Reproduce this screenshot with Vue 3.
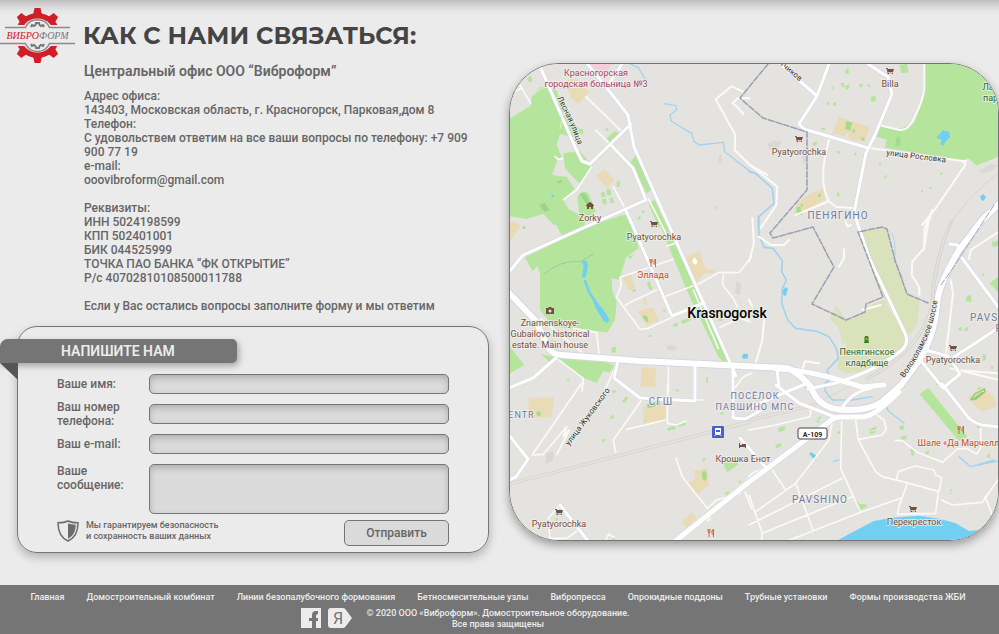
<script setup>
import { ref } from 'vue'

const name = ref('')
const phone = ref('')
const email = ref('')
const message = ref('')

const links = [
  'Главная',
  'Домостроительный комбинат',
  'Линии безопалубочного формования',
  'Бетносмесительные узлы',
  'Вибропресса',
  'Опрокидные поддоны',
  'Трубные установки',
  'Формы производства ЖБИ'
]

const teeth = [-84, -42, 0, 42, 84]

const places = [
  { x: 596, y: 76, t: 'Красногорская', c: 'rose' },
  { x: 596, y: 87, t: 'городская больница №3', c: 'rose' },
  { x: 590, y: 221, t: 'Zorky', c: 'brown' },
  { x: 890, y: 87, t: 'Billa', c: 'brown' },
  { x: 799, y: 155, t: 'Pyatyorochka', c: 'brown' },
  { x: 654, y: 240, t: 'Pyatyorochka', c: 'brown' },
  { x: 653, y: 278, t: 'Эллада', c: 'orange' },
  { x: 550, y: 326, t: 'Znamenskoye-', c: 'brown' },
  { x: 550, y: 337, t: 'Gubailovo historical', c: 'brown' },
  { x: 550, y: 348, t: 'estate. Main house', c: 'brown' },
  { x: 867, y: 355, t: 'Пенягинское', c: 'green' },
  { x: 867, y: 366, t: 'кладбище', c: 'green' },
  { x: 953, y: 363, t: 'Pyatyorochka', c: 'brown' },
  { x: 743, y: 462, t: 'Крошка Енот', c: 'brown' },
  { x: 559, y: 527, t: 'Pyatyorochka', c: 'brown' },
  { x: 914, y: 525, t: 'Перекресток', c: 'brown' },
  { x: 963, y: 446, t: 'Шале «Да Марчелло»', c: 'orange' },
  { x: 997, y: 90, t: 'Ландш', c: 'green' },
  { x: 993, y: 101, t: 'парк', c: 'green' }
]

const districts = [
  { x: 838, y: 219, t: 'ПЕНЯГИНО', c: 'big' },
  { x: 661, y: 405, t: 'СГШ', c: 'big' },
  { x: 755, y: 399, t: 'ПОСЁЛОК' },
  { x: 755, y: 410, t: 'ПАВШИНО МПС' },
  { x: 820, y: 503, t: 'PAVSHINO', c: 'big' },
  { x: 518, y: 418, t: 'CENTR' },
  { x: 998, y: 321, t: 'PAVSHINO', c: 'big' },
  { x: 1003, y: 332, t: 'PO', c: 'big' }
]

const carts = [[890, 71], [799, 139], [654, 224], [953, 348], [559, 512], [913, 509]]
const forks = [[653, 263], [961, 430], [711, 533]]
</script>

<template>
  <div class="page">
    <main class="contacts">
      <section class="info">
        <header class="heading">
          <svg class="logo" viewBox="0 0 75 55" role="img" aria-label="Виброформ">
            <g fill="#cf2027">
              <circle cx="37.500" cy="27.500" r="22.500" />
              <path
                v-for="a in teeth"
                :key="'t' + a"
                d="M33 7 34.500 0h6L42 7z"
                :transform="`rotate(${a} 37.500 27.500)`"
              />
              <path
                v-for="a in teeth"
                :key="'b' + a"
                d="M33 48 34.500 55h6L42 48z"
                :transform="`rotate(${a} 37.500 27.500)`"
              />
            </g>
            <circle cx="37.500" cy="27.500" r="17" fill="#ebebeb" />
            <path d="M0 17h75v21H0z" fill="#ebebeb" />
            <path
              d="M5 19.500h20.500C30 9 45 9 49.500 19.500H70M0 35.500h25.500c4.500 10.500 19.500 10.500 24 0H75"
              fill="none"
              stroke="#8b8b8b"
              stroke-width="1.500"
            />
            <path
              d="M31 19l1-2 2 1 1.500-1 .5-2h3l.5 2 1.500 1 2-1 1 2M31 36l1 2 2-1 1.500 1 .5 2h3l.5-2 1.500-1 2 1 1-2"
              fill="none"
              stroke="#777"
              stroke-width="2"
            />
            <text class="logo-text" x="37.500" y="31" text-anchor="middle">
              <tspan fill="#cf2027">ВИБРО</tspan><tspan fill="#777">ФОРМ</tspan>
            </text>
          </svg>
          <h1>КАК С НАМИ СВЯЗАТЬСЯ:</h1>
        </header>

        <div class="details">
          <h2>Центральный офис ООО “Виброформ”</h2>
          <address>
            Адрес офиса:<br />
            143403, Московская область, г. Красногорск, Парковая,дом 8<br />
            Телефон:<br />
            С удовольствем ответим на все ваши вопросы по телефону: +7 909 900 77 19<br />
            e-mail:<br />
            ooovibroform@gmail.com
          </address>
          <p>
            Реквизиты:<br />
            ИНН 5024198599<br />
            КПП 502401001<br />
            БИК 044525999<br />
            ТОЧКА ПАО БАНКА “ФК ОТКРЫТИЕ”<br />
            Р/с 40702810108500011788
          </p>
          <p>Если у Вас остались вопросы заполните форму и мы ответим</p>
        </div>

        <form class="card" @submit.prevent>
          <h3 class="ribbon">НАПИШИТЕ НАМ</h3>
          <div class="fields">
            <label for="f-name">Ваше имя:</label>
            <input id="f-name" v-model="name" type="text" />
            <label for="f-phone">Ваш номер телефона:</label>
            <input id="f-phone" v-model="phone" type="tel" />
            <label for="f-email">Ваш e-mail:</label>
            <input id="f-email" v-model="email" type="email" />
            <label for="f-message" class="top">Ваше сообщение:</label>
            <textarea id="f-message" v-model="message"></textarea>
          </div>
          <div class="submit-row">
            <svg class="shield" viewBox="0 0 22 22" aria-hidden="true">
              <path
                d="M11 1C8 2.500 4.500 2.800 1 2.800 1 11 3 17.500 11 21c8-3.500 10-10 10-18.200-3.500 0-7-.3-10-1.800z"
                fill="none"
                stroke="#6b6b6b"
                stroke-width="1.500"
              />
              <path d="M11 3.200c2.500 1 5 1.400 7.700 1.500-.2 6.500-2 11-7.700 14z" fill="#6b6b6b" />
            </svg>
            <p>Мы гарантируем безопасность<br />и сохранность ваших данных</p>
            <button type="submit">Отправить</button>
          </div>
        </form>
      </section>

      <section class="map">
        <svg
          viewBox="510 64 488 476"
          preserveAspectRatio="xMidYMid slice"
          role="img"
          aria-label="Krasnogorsk"
        >
          <defs>
            <path id="lesnaya" d="M557 98C566 115 575 132 582 160" />
            <path id="volokolam" d="M904 378C922 352 936 330 940 280" />
            <path id="zhukov" d="M569 446 612 388" />
            <path id="roslovka" d="M886 155 950 163" />
            <path id="letchikov" d="M772 58 806 87" />
          </defs>
          <path fill="#e4e3e0" d="M500 54h510v500H500z" />

          <!-- parks, squares and water -->
          <g transform="translate(500 55) scale(.3333)">
            <g fill="#b5e59d">
              <path d="M20 196 92 152 95 122 122 95 168 103 198 175 240 225 238 250 180 238 170 270 185 305 172 315 156 360 200 366 224 402 190 434 205 462 240 480 215 500 160 510 130 476 80 492 20 482z" />
              <path d="M190 295 240 288 278 334 238 386 195 340z" />
              <path d="M232 425q15-25 35-8l20 52-30 25-20-22zM320 250 345 227 362 236 332 266zM388 325 410 297 455 405 440 415 400 335zM445 443 465 436 500 515 475 515zM318 404l12-3 4 18-11 3zM302 413l11-3 4 14-12 4zM328 430l10-3 5 16-11 2zM305 433l13-2 2 16-11 2zM350 380l10-5-2 22-8-2zM80 70l12-8 6 16-10 5zM205 500 260 488 250 520 210 520zM240 220l10 4-2 15-10-5zM315 222l8-4 3 8-8 2zM425 468l8-3 1 8-8 2zM414 486l8-3-1 10-8 1zM345 500l40-30 10 40z" />
            </g>
            <path fill="#e8dbb5" d="M198 78 225 70 268 110 237 147 212 128zM287 362 312 342 343 374 322 400z" />
            <path fill="#f3cfdd" d="M268 24h70l-22 32-30 6z" />
            <path fill="#80b96c" opacity=".4" d="M240 418q25-15 30 45M117 450l18-6 14 22-16 4zM170 380l16-6v8l-14 3z" />
            <path fill="#71cff1" d="M155 415l8 8-4 5-5-6z" />
            <path fill="#d9d8d4" d="M658 300h8l-2 26h-8zM643 452l8 2-2 10-6-2z" />
          </g>
          <g transform="translate(749 55) scale(.3333)">
            <g fill="#b5e59d">
              <path d="M528 20H760V300L682 332 658 310 640 316 408 278 413 254 374 242 388 210 450 222 495 205 520 140z" />
              <path d="M452 30l22-3 5 25-22 3zM290 45l8-10 2 23-12-4zM275 85l9-3 4 14-9 1zM290 92l10-4 1 12-10 6zM330 86l12 1-3 10-8-2zM355 88l10 2-3 6-8-2zM367 124l14-1-2 18-13-2zM247 96h6v7h-6zM252 143l9-2v11h-9zM234 142h7v7h-7zM192 262l14-3-4 12-10 1zM264 289l8-1v8h-8zM316 294l5-3 1 9-6 1zM264 414l6-3 2 13-6 1zM390 323l7-1v8h-7zM404 367l9-8 2 5-7 8zM516 406h6v6h-6zM541 396h6v6h-6zM574 352h6v8h-6zM140 460l18-8 4 26-18 5zM216 219h12v5h-12z" />
            </g>
            <path fill="#e8dbb5" d="M268 185 362 216 348 262 300 252 297 232 288 244 250 235zM134 480 140 450 170 424 222 398 228 432 165 475z" />
            <path fill="#a4dc8f" d="M292 198l18 5-6 24-16-6zM312 222l7 3-4 10-5-3zM338 246l8 3-2 9-6-2zM142 458l12-4 4 24-14 3zM154 446l8 2-2 10zM208 418h8v8h-8zM442 246l12-3v30h-16z" />
            <path fill="#71cff1" d="M563 246l12-12 5-8 20 4 4 16-10 8-12 18-8-4 5-14-12-3zM694 424l8-7 9 8-7 13-9-5z" />
            <path fill="#dbd9d5" d="M54 268l20-12 25 4-12 20-25 4zM688 348l40-22 20 6-30 18-15 4zM160 285l15 15v30l-15-10z" />
          </g>
          <g transform="translate(500 220) scale(.3333)">
            <g fill="#b5e59d">
              <path d="M75 112 220 42 300 8 365-15 390-10 416 85 378 112 358 180 335 175 337 212 350 245 345 300 322 337 160 320 120 270V160L112 138 98 154z" />
              <path d="M155-10 185 45 255 35 240-15zM20 365 45 400 73 435 38 455 20 465zM122 402 165 412 310 424 343 436 328 458 310 454 290 488 240 470 170 418 150 428zM470-10 497-15 535 80 580 170 605 240 655 345 685 415 675 430 655 410 560 210 510 90zM335 382l13-2 1 17-14 2zM440 186l9-2 8 22-9 4zM398 208l10-1-2 8-8 1zM386 108l14-3-4 9-10 2zM520 312l15-4-4 11-10 1zM542 304l28-12 8 6-30 14zM580 292l20-7v8l-20 7zM446 345h9v5h-9zM655 296l10-3 2 8-10 3zM619 472h5v18h-5zM201 477l7-2 2 6-8 2zM491 267l6 3-3 6-5-3z" />
            </g>
            <path fill="#e8dbb5" d="M20 2 55 8 60 22 28 70zM368 170l26-5 12 40-22 5zM428 236l8-6 6 22-8 3zM412 274 460 262 476 304 440 316 430 298zM558 112 598 92 616 145 648 150 640 160 615 158 590 186zM424 442l44 2-2 56h-44zM152 360l12-3 4 14-14 4z" />
            <path fill="#fff" d="M578 118l7-6 8 14-7 9-8-7z" />
            <path fill="#a4dc8f" d="M430 285l12 4 4 15-8 3-10-15zM68 20l8-2v7l-8 3z" />
            <path fill="#71cff1" d="M243 122q10-4 20 5 2 15-5 42-4 6-12 3 2-20 5-35zM250 180l8-1 12 35 27 40 14 16 18 30-6 9-12-5-25-42-6-18-16-26zM725 408l7-7 12 1v13l-14 2z" />
            <path fill="none" stroke="#92cfa9" stroke-width="3" d="M130 164Q180 120 243 124l38-23" />
            <path fill="#d9d8d4" d="M500 380q8-7 22-4l10 8q-16 12-32 2zM710 180l15 15-5 30-15-5z" />
          </g>
          <g transform="translate(749 220) scale(.3333)">
            <path fill="#dae2bb" d="M326 38 400 20 415 30 440 125 475 218 512 240 505 310 485 342 462 345 420 250 402 240 345 265 345 280 292 302 262 254 242 298 268 322 282 370 305 365 310 380 275 388 265 445 290 462 360 450 430 415 470 370 440 300 390 210z" />
            <path fill="#dae2bb" d="M292 302 402 240 475 345 470 370 430 415 360 450 290 420z" />
            <path fill="#b5e59d" d="M655 225l12 2v20l-18-4zM722 190 750 168v50zM728 65l22-3v15l-18 4zM702 160l5 1-3 7-5-1zM645 328l12-9 1 12-10 4zM630 324l8-3-1 12-10-2zM702 402l10 3-2 15-10 4zM565 478l8 3-4 15-8-2zM604 438l20-5-4 10-16 1zM726 438h6v9h-6zM686 502h12v8h-12z" />
            <path fill="#71cff1" d="M102 210l6-8 8 2v8l-4 4 1 8-8 4-5-10z" />
            <path fill="none" stroke="#a6d6e8" stroke-width="3" d="M428 38q16 35 8 85l27 55" />
          </g>
          <g transform="translate(500 385) scale(.3333)">
            <g fill="#b5e59d">
              <path d="M366 48l12-14 7 6-12 14zM336 18l8-4 5 5-9 7zM330 98l10-10 3 8-9 8zM305 163l8-2 2 8-8 2zM502 130l24-8v10l-22 6zM530 120l26-9v10l-24 4zM526 12l13 3-4 5-8-1zM668 235 690 218 716 238 682 262zM608 220l8-2v8l-8 3zM675 324l12-6v9l-12 2zM715 290l9-5v9l-8 1zM340 456l8 2-3 7-8-2zM168 400l6-3-1 9-8 2zM250 418l10-3v7l-10 2zM660 84l10-3v7l-10 1z" />
            </g>
            <path fill="#e8dbb5" d="M86 38h75v22l-9 37H85zM430 66 497 50 495 104 430 118zM425-4h40v6h-40zM565 294 588 280 580 258 622 248 627 300 592 328zM545 412 575 382 590 400 560 428z" />
            <path fill="#a4dc8f" d="M606 262q10-12 14 5v15q-10 12-14-5zM110 80h12v12h-12zM440 58l40-12v14l-36 10z" />
            <path fill="#d9d8d4" d="M138 204l22-6v28l-24 10z" />
          </g>
          <g transform="translate(749 385) scale(.3333)">
            <g fill="#b5e59d">
              <path d="M512 28 538 8 655 155 630 168zM206 100l10-8 1 7-10 6zM86 130l20-7 3 12-18 7zM78 180l20-7-2 12-14 5zM265 140l10-3v9h-10zM362 132l20-8v9l-20 4zM360 140l20-2v6l-18 3zM450 125l14-6 2 14-12 2zM455 155l18-4v10l-15 5zM484 192l10-5 2 22-8 5zM530 200l10-3v9l-10 2zM714 210l8-5 1 12-8 3zM600 324l8-3-1 7zM602 316l7-6v7zM318 345 334 358 350 357 354 365 328 378zM198 108l16-3-4 9zM684 124l8-2v7l-7 2z" />
            </g>
            <path fill="#e8dbb5" d="M655 36 702 5 740 42 742 64 698 80z" />
            <path fill="none" stroke="#8ccc78" stroke-width="4" d="M666 44l12-17 28-15 2 8-28 22zM676 40l26-18" />
            <path fill="#71cff1" d="M255 472 300 447 375 408 430 398 510 392 575 402 620 415 660 438 690 435 640 490H250zM180 206l7-4 14 9v13l-10-6z" />
          </g>

          <!-- minor streets and streams -->
          <g fill="none" stroke-linejoin="round" stroke-linecap="round">
            <g transform="translate(500 55) scale(.3333)">
              <path stroke="#fbfaf7" stroke-width="5" d="M258 125 368 232M288 226 335 272M275 335 230 405 190 434M340 395 378 465M445 430 500 540M48 108 65 98M60 90 92 145M165 305l10 8 12-2" />
              <path stroke="#d3efc2" stroke-width="4" d="M95 122 125 100 165 90M198 150 180 220" />
              <path stroke="#fbfaf7" stroke-width="6" d="M730 110 695 94 647 133 706 240 704 285 750 330 802 360M748 130h-35l-15 15 15 12 17 20" />
              <path stroke="#a2d3ee" stroke-width="4" d="M390 26 415 38 443 84M492 146 528 152 530 164 510 180 514 198 575 236 582 260 598 270 670 262 674 290 752 350" />
            </g>
            <g transform="translate(749 55) scale(.3333)">
              <path stroke="#fbfaf7" stroke-width="6" d="M526 26V100Q525 130 495 190 475 235 440 222L388 210M355 278 405 285 640 318 650 328 560 460 520 510M640 318h12M240 255Q205 380 240 438L140 480M240 438 260 455 315 460M550 465 530 512" />
              <path stroke="#a2d3ee" stroke-width="5" d="M0 350 20 355 70 400 75 445 30 485 28 520" />
              <path stroke="#fbfaf7" stroke-width="6" d="M0 328 85 395 82 450 35 520" />
              <path stroke="#dcdbd6" stroke-width="4" d="M760 345Q640 440 600 515" />
            </g>
            <g transform="translate(500 220) scale(.3333)">
              <path stroke="#fbfaf7" stroke-width="5" d="M360 172 520 118M360 172 364 195 350 232 420 328 445 325 520 290M376 256 395 245 470 210M490 232 600 190 655 158 718 157 755 110M500 79 530 68M580 210 655 385M660 322 720 295 750 305M670 165 668 195 700 235 712 260M505 440V515M170 415 250 475 246 515M120 295 250 400M220 325 290 337 298 410M700 510 730 470 755 460M340 455 315 510" />
            </g>
            <g transform="translate(749 220) scale(.3333)">
              <path stroke="#a2d3ee" stroke-width="5" d="M28-10 30 45 45 82 72 85 100 122 98 155 112 180 100 205 98 250 116 300 140 325 205 334 240 350 262 385 268 415 235 450 240 475 230 500" />
              <path stroke="#fbfaf7" stroke-width="6" d="M10-5 15 70 0 125M0 240 10 260M30 50 65 75 105 75 120 60M285 88V115L270 140M160 448 168 424 210 430M290 5 295 20 305 15M540-5 525 85 490 125 488 165 510 200 512 225M605 180 612 220 590 410M750 35 665 90 660 118M620 450 750 460M605 445 750 480M45 300 40 360 20 430M340 270 395 255M545-8 527 25 525 90" />
              <path stroke="#d3d2cd" stroke-width="3" d="M605 0Q550 120 545 255 520 380 350 475M612 0Q560 120 552 255 527 386 356 480" />
            </g>
            <g transform="translate(500 385) scale(.3333)">
              <path stroke="#fbfaf7" stroke-width="5" d="M245-5 100 205M95 210 130 208 200 125 190 155 208 135 170 210M425 45 340 165 347 203M503-5 502 115 530 120 558 108M380 133 495 105M528 220 547 275 622 370 650 345 720 325M145 400 180 360M145 400 150 460 200 460 235 435M318 465 325 448 345 458M735 320 755 370M580 45h30M615 395l10 12 6-8" />
              <path stroke="#d8d6cf" stroke-width="3" d="M0 300 330 215 750 106M0 308 750 115" />
            </g>
            <g transform="translate(749 385) scale(.3333)">
              <path stroke="#d8d6cf" stroke-width="3" d="M0 102 200 55 310 0M0 110 200 63" />
              <path stroke="#fbfaf7" stroke-width="5" d="M188 68 183 95 80 120 0 135M250 110 240 165 140 295 20 380M278 110 275 250 320 350 335 382 455 340M320 105 328 165 380 260 400 275 470 292 570 320 578 278 560 270 555 255 498 243 448 260 442 285M475 295 450 365 445 388 560 385 568 320M578 345 610 360 700 352 750 280M708 335 730 390M0 330 40 445 37 470M140 295 192 435M70 255 110 315M0 420 280 280M40 445 310 335M110 470 335 382M330 163 400 150 412 132 405 105 370 80M440 167h20l45 35 75 30 45-40 28-2 30 18 12-20V130M0 275 10 265 55 245" />
              <path stroke="#a2d3ee" stroke-width="4" d="M230-10 228 18 250 45 310 45 370 35M405 45 418 78 465 114M630 215 665 245 745 228M685 240 735 225M252 230 268 225" />
            </g>
          </g>

          <!-- main roads -->
          <g fill="none" stroke-linejoin="round" stroke-linecap="round">
            <g v-for="pass in 2" :key="pass" :class="'roads pass' + pass">
              <path class="w3" d="M539 64 575 147 582 161 590 164 631 124M586 62 614 97 628 115 634 147 736 376M611 145 633 168 646 200 621 211 523 255 509 272" />
              <path class="w3" d="M609 84 622 64M626 211 632 224 672 316 704 303M829 64 817 96 799 124 804 129 868 148M868 64 888 77 892 94 875 135 866 153 854 213 870 260 904 331Q910 342 902 350 880 369 836 383L808 389M778 62 817 96" />
              <path class="w3" d="M509 388 533 378 556 358M618 361 614 378 640 398 695 401V364M733 365V418L745 419 760 411M509 435 528 459 516 477 509 480M560 505 588 541M740 438 767 469M925 350 948 356 960 374 943 388 921 361M954 357 1000 327M962 258 999 308M942 384 964 412Q970 422 982 425L999 427M777 369 779 387M749 408 805 384M776 385 799 403 835 417M841 410Q850 392 872 388" />
              <path class="w5" d="M509 293 536 321 548 347Q552 355 562 355L640 361 786 368Q796 370 811 387 818 407 839 409.500 866 412 882 402L901 385 918 362Q934 338 937 305 938 285 959 250L982 220 1000 203" />
              <path class="w4" d="M673 543 749 482 829 422Q834 417 841 417H864Q876 415 899 392M776 369Q796 369 829 377L862 387 884 385" />
              <path class="w3" d="M950 244 957 245 961 250" />
            </g>
            <path d="M994 205 953 268 941 285" stroke="#a1a3b3" stroke-dasharray="7 2" />
            <path
              d="M749 106 763 118 807 132 807 190 770 233 773 238 813 227 829 258 834 267 812 304 846 320 865 312 866 304 883 297 858 232 882 227 887 229 895 260 907 294 928 303M768 64 740 98 749 106"
              stroke="#9c9eb1"
              stroke-width="1.500"
              stroke-dasharray="6 2"
            />
          </g>

          <!-- labels -->
          <g class="street">
            <text><textPath href="#lesnaya">Лесная улица</textPath></text>
            <text><textPath href="#volokolam">Волоколамское шоссе</textPath></text>
            <text><textPath href="#zhukov">улица Жуковского</textPath></text>
            <text><textPath href="#roslovka">улица Рословка</textPath></text>
            <text><textPath href="#letchikov">Летчиков</textPath></text>
          </g>
          <text
            v-for="(p, i) in places"
            :key="'p' + i"
            :x="p.x"
            :y="p.y"
            :class="['place', p.c]"
          >{{ p.t }}</text>
          <text
            v-for="(d, i) in districts"
            :key="'d' + i"
            :x="d.x"
            :y="d.y"
            :class="['district', d.c]"
          >{{ d.t }}</text>
          <text class="city" x="727" y="318">Krasnogorsk</text>

          <!-- markers -->
          <path
            v-for="(c, i) in carts"
            :key="'c' + i"
            :transform="`translate(${c[0]} ${c[1]})`"
            d="M-4-3h1.500l.5 1H4L3 1h-5l.2.800H3V3H2V2.200h-3V3h-1.200L-3.200-2H-4z"
            fill="#73503f"
          />
          <path
            v-for="(f, i) in forks"
            :key="'f' + i"
            :transform="`translate(${f[0]} ${f[1]})`"
            d="M-3-4v3l1 1v4M-1-4v3l-1 1M-2-4v4M2.500 4v-8L1-2v3h1.500"
            fill="none"
            stroke="#d0693b"
          />
          <path fill="#73503f" d="M587 204l3-2 3 2v1h1v1h-1v3h-2v-2h-2v2h-2v-3h-1v-1h1zM546 308h2l1-1h2l1 1h2v6h-8zM739 443h1v2h2v-1h4v4h-1v-1h-5v1h-1z" />
          <circle cx="550" cy="311" r="1.500" fill="#e4e3e0" />
          <path fill="#2f8415" d="M864 343v-1h.500v-5l1-1h2l1 1v5h.500v1z" />
          <path stroke="#dae2bb" d="M865.500 339h2" />
          <rect x="712" y="426" width="12" height="12" rx="1" fill="#4a5dce" />
          <path fill="#fff" d="M715 428h6v6h-6zM714 436l2-2h4l2 2h-1l-1-1h-4l-1 1z" />
          <path fill="#4a5dce" d="M716 430h4v2h-4z" />
          <rect x="798" y="428" width="29" height="11" rx="2" fill="#fff" stroke="#444" />
          <text class="shield-no" x="812.500" y="436.500">A-109</text>
        </svg>
      </section>
    </main>

    <footer>
      <nav>
        <a v-for="l in links" :key="l" href="#">{{ l }}</a>
      </nav>
      <div class="legal">
        <a href="#" aria-label="Facebook">
          <svg width="20" height="20" viewBox="0 0 20 20">
            <path fill="#ececec" d="M0 0h20v20h-5v-7h2v-3h-2V8q0-2 2-2V3h-2q-4 0-4 4v3H8v3h3v7H0z" />
          </svg>
        </a>
        <a href="#" aria-label="Яндекс">
          <svg width="24" height="20" viewBox="0 0 24 20">
            <path fill="#ececec" d="M3 0h12q2 0 3 2l6 8-6 8q-1 2-3 2H3q-3 0-3-3V3q0-3 3-3z" />
            <text class="ya" x="10" y="16">Я</text>
          </svg>
        </a>
        <p>© 2020 ООО «Виброформ». Домостроительное оборудование.<br />Все права защищены</p>
      </div>
    </footer>
  </div>
</template>

<style>
body {
  background: #ebebeb;
}
</style>

<style scoped>
.page {
  min-height: 100vh;
  display: flex;
  flex-direction: column;
  overflow: hidden;
  background: linear-gradient(#bdbdbd, #d6d6d6 6px, #e6e6e6 11px, #ebebeb 16px);
  color: #666;
  font: 500 12px/14px Roboto, "Liberation Sans", sans-serif;
}

.contacts {
  flex: 1;
  display: grid;
  grid-template-columns: minmax(0, 509fr) minmax(0, 490fr);
  align-items: start;
  padding-bottom: 32px;
}

.heading {
  display: flex;
  gap: 8px;
  padding-top: 8px;
}

.logo {
  width: 75px;
  height: 55px;
}

.logo-text {
  font: italic 10px "Liberation Serif", serif;
}

h1,
h2,
h3,
p {
  margin: 0;
}

h1 {
  color: #444;
  font: 700 24px/55px Montserrat, Inter, sans-serif;
}

.details {
  display: grid;
  gap: 14px;
  padding: 0 34px 0 84px;
}

h2 {
  margin-bottom: -4px;
  font-size: 14px;
  line-height: 16px;
  font-weight: 600;
}

address {
  font-style: normal;
}

.card {
  margin: 13px 20px 0 17px;
  padding: 12px 39px 6px;
  border: 1px solid #757575;
  border-radius: 20px;
  box-shadow: 0 4px 10px rgba(0, 0, 0, 0.25);
}

.ribbon {
  position: relative;
  width: 237px;
  margin-left: -57px;
  padding-left: 61px;
  box-sizing: border-box;
  background: #757575;
  color: #ececec;
  border-radius: 8px 5px 5px 0;
  box-shadow: 2px 3px 6px rgba(0, 0, 0, 0.3);
  font-size: 14px;
  line-height: 24px;
  font-weight: 600;
}

.ribbon::after {
  content: "";
  position: absolute;
  top: 100%;
  left: 0;
  width: 18px;
  height: 17px;
  background: #555;
  clip-path: polygon(0 0, 100% 0, 100% 100%);
}

.fields {
  display: grid;
  grid-template-columns: 80px minmax(0, 1fr);
  grid-template-rows: 20px 20px 20px 50px;
  gap: 10px 12px;
  margin-top: 11px;
  align-items: center;
}

.fields .top {
  align-self: start;
}

input,
textarea {
  box-sizing: border-box;
  width: 100%;
  height: 100%;
  margin: 0;
  padding: 2px 8px;
  border: 1px solid #757575;
  border-radius: 5px;
  background: #dadada;
  box-shadow: inset 0 3px 6px rgba(0, 0, 0, 0.2);
  color: #444;
  font: inherit;
  resize: none;
}

.submit-row {
  display: flex;
  gap: 7px;
  margin-top: 6px;
}

.shield {
  width: 22px;
  height: 22px;
}

.submit-row p {
  flex: 1;
  font-size: 9px;
  line-height: 11px;
}

button {
  width: 105px;
  height: 26px;
  padding: 0;
  border: 1px solid #757575;
  border-radius: 5px;
  background: #dadada;
  color: #666;
  font: inherit;
}

.map {
  box-sizing: border-box;
  margin-top: 63px;
  aspect-ratio: 490 / 478;
  border: 1px solid #757575;
  border-radius: 50px;
  overflow: hidden;
  box-shadow: 0 4px 10px rgba(0, 0, 0, 0.35);
}

.map svg {
  display: block;
  width: 100%;
  height: 100%;
}

.roads.pass1 {
  stroke: #d5d5e6;
}

.roads.pass2 {
  stroke: #fff;
}

.pass1 .w3 {
  stroke-width: 4;
}

.pass2 .w3 {
  stroke-width: 3;
}

.pass1 .w4 {
  stroke-width: 6;
}

.pass2 .w4 {
  stroke-width: 5;
}

.pass1 .w5 {
  stroke-width: 8;
}

.pass2 .w5 {
  stroke-width: 6;
}

.map text {
  paint-order: stroke;
  stroke: rgba(240, 240, 236, 0.8);
  stroke-width: 2px;
  stroke-linejoin: round;
  font: 400 9px Roboto, sans-serif;
}

.map .place,
.map .district,
.map .city,
.map .shield-no {
  text-anchor: middle;
}

.map .brown {
  fill: #73503f;
}

.map .rose {
  fill: #a8476b;
}

.map .orange {
  fill: #c8511b;
}

.map .green {
  fill: #2c6b1c;
}

.map .street text {
  fill: #333;
  font-size: 8px;
}

.map .district {
  fill: #7078a3;
  letter-spacing: 1px;
}

.map .big {
  font-size: 10px;
}

.map .city {
  fill: #000;
  font-size: 14px;
  font-weight: 500;
}

.map .shield-no {
  fill: #222;
  stroke: none;
  font-size: 7px;
  font-weight: 700;
}

footer {
  padding: 7px 16px 4px;
  background: #757575;
  color: #ececec;
  font-size: 9px;
  line-height: 11px;
}

nav {
  display: flex;
  justify-content: center;
  gap: 22px;
  padding-right: 3px;
  white-space: nowrap;
}

footer a {
  color: inherit;
  text-decoration: none;
}

.legal {
  display: flex;
  justify-content: center;
  gap: 7px;
  padding: 5px 68px 0 0;
}

.legal svg {
  display: block;
}

.legal p {
  margin-left: 7px;
  text-align: center;
}

.ya {
  fill: #757575;
  text-anchor: middle;
  font: 400 16px Roboto, sans-serif;
}
</style>
